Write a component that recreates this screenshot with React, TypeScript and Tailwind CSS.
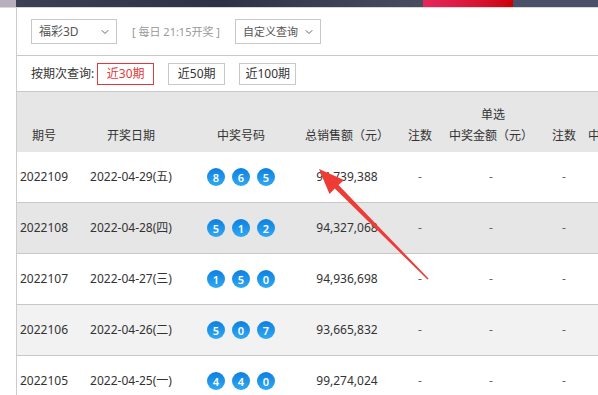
import { ChevronDown } from "lucide-react";

const rows = [
  { no: "2022109", date: "2022-04-29(五)", balls: ["8", "6", "5"], sales: "94,739,388", bg: "bg-white" },
  { no: "2022108", date: "2022-04-28(四)", balls: ["5", "1", "2"], sales: "94,327,068", bg: "bg-[#e6e6e6]" },
  { no: "2022107", date: "2022-04-27(三)", balls: ["1", "5", "0"], sales: "94,936,698", bg: "bg-white" },
  { no: "2022106", date: "2022-04-26(二)", balls: ["5", "0", "7"], sales: "93,665,832", bg: "bg-[#f2f2f2]" },
  { no: "2022105", date: "2022-04-25(一)", balls: ["4", "4", "0"], sales: "99,274,024", bg: "bg-white" },
];

const cols = "grid grid-cols-[54px_120px_100px_112px_34px_108px_38px_86px]";

const Ball = ({ n }: { n: string }) => (
  <span className="flex h-[18px] w-[18px] items-center justify-center rounded-full bg-gradient-to-b from-[#0d7fe0] to-[#2fa9f2] text-[11px] font-semibold leading-none text-white">
    {n}
  </span>
);

const Select = ({ label, small }: { label: string; small?: boolean }) => (
  <div className="flex h-[25px] w-[86px] items-center justify-between whitespace-nowrap border border-[#c8c8c8] bg-white pl-[7px] pr-[5px] text-[#555]">
    <span className={small ? "text-[11px]" : "text-[12px]"}>{label}</span>
    <ChevronDown className="h-3 w-3 shrink-0 text-[#666]" strokeWidth={2} />
  </div>
);

const App = () => {
  return (
    <div className="relative h-[395px] w-[598px] overflow-hidden bg-white font-['Noto_Sans','Noto_Sans_CJK_SC',sans-serif] text-[12px] leading-5 text-[#333]">
      {/* banner strip */}
      <div className="flex h-2 border-b border-[#d8d8d8]">
        <div className="w-4 bg-[#b9aebd]" />
        <div className="w-[407px] bg-gradient-to-r from-[#3d3f52] via-[#2f3144] to-[#4a4d60]" />
        <div className="w-[90px] bg-gradient-to-r from-[#e6265c] to-[#cc0000]" />
        <div className="flex-1 bg-[#4a5068]" />
      </div>

      <div className="flex">
        <div className="w-4 shrink-0" />
        <div className="min-w-0 flex-1 border-l border-[#ccc]">
          <div className="flex h-[48px] items-center gap-[15px] border-b border-[#c8c8c8] pl-[14px]">
            <Select label="福彩3D" />
            <span className="whitespace-nowrap text-[11px] text-[#999]">[ 每日 21:15开奖 ]</span>
            <Select label="自定义查询" small />
          </div>

          <div className="flex h-[36px] items-center border-b border-[#c8c8c8] pl-[14px]">
            <span className="mr-[3px] text-[12px]">按期次查询:</span>
            <button className="mr-[14px] h-[22px] w-[57px] border border-[#e4393c] text-[12px] text-[#e4393c]">近30期</button>
            <button className="mr-[14px] h-[22px] w-[57px] border border-[#c8c8c8] text-[12px]">近50期</button>
            <button className="h-[22px] w-[57px] border border-[#c8c8c8] text-[12px]">近100期</button>
          </div>

          <div className={`${cols} h-[60px] content-end gap-y-px bg-[#e6e6e6] pb-[6px] text-center`}>
            <div className="col-span-3 col-start-5 row-start-1">单选</div>
            <div className="col-start-1 row-start-2">期号</div>
            <div className="col-start-2 row-start-2">开奖日期</div>
            <div className="col-start-3 row-start-2">中奖号码</div>
            <div className="col-start-4 row-start-2">总销售额（元）</div>
            <div className="col-start-5 row-start-2">注数</div>
            <div className="col-start-6 row-start-2">中奖金额（元）</div>
            <div className="col-start-7 row-start-2">注数</div>
            <div className="col-start-8 row-start-2 whitespace-nowrap pl-[5px] text-left">中奖金额（元）</div>
          </div>

          {rows.map((r) => (
            <div key={r.no} className={`${cols} h-[51px] items-center border-b border-[#c8c8c8] text-center ${r.bg}`}>
              <div>{r.no}</div>
              <div>{r.date}</div>
              <div className="flex justify-center gap-[7px]">
                {r.balls.map((b, i) => (
                  <Ball key={i} n={b} />
                ))}
              </div>
              <div>{r.sales}</div>
              <div className="text-[#666]">-</div>
              <div className="text-[#666]">-</div>
              <div className="text-[#666]">-</div>
              <div />
            </div>
          ))}
        </div>
      </div>

      {/* annotation arrow */}
      <svg className="pointer-events-none absolute left-0 top-0" width="598" height="395">
        <polygon
          points="319,169 344,180 338.5,185 428.5,278.5 427.5,279.5 334.8,188.6 329.5,194"
          fill="#ee3b36"
        />
      </svg>
    </div>
  );
};

export default App;
